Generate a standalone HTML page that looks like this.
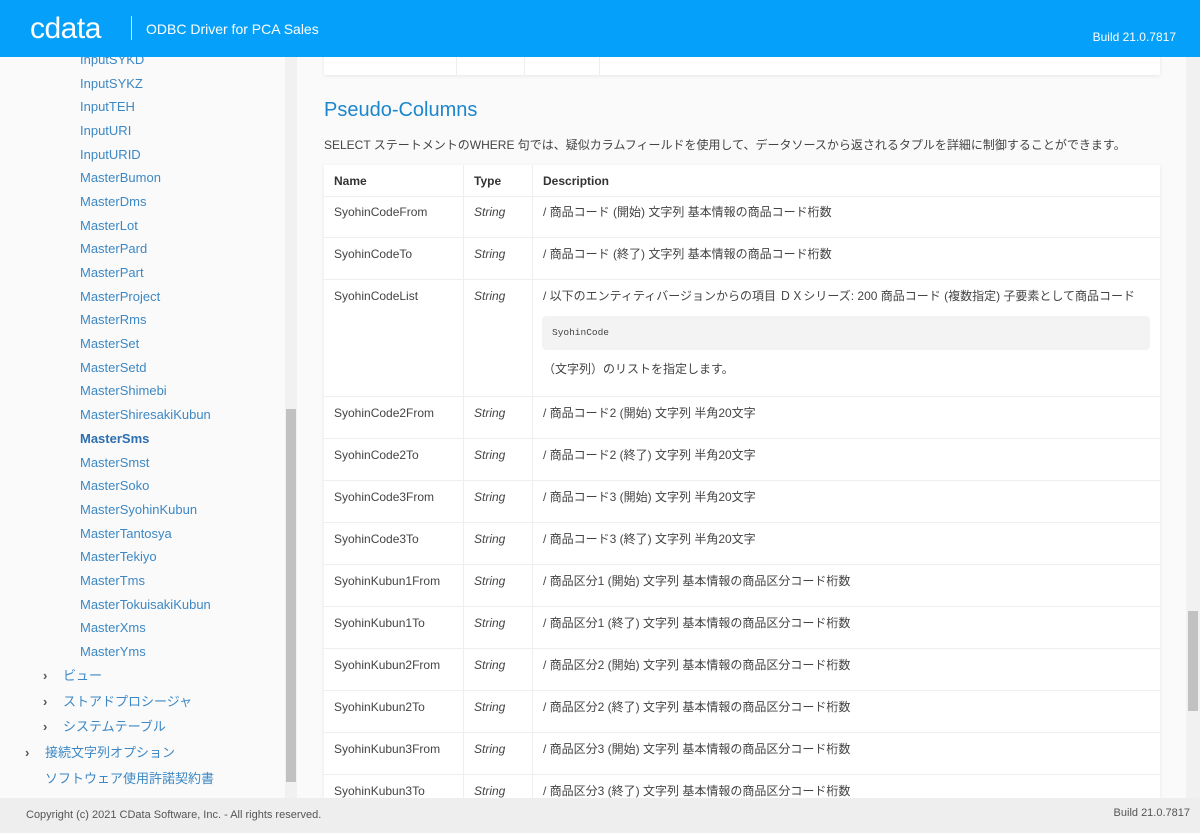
<!DOCTYPE html>
<html><head><meta charset="utf-8"><style>
*{margin:0;padding:0;box-sizing:border-box}
body{width:1200px;height:833px;overflow:hidden;background:#fafafa;font-family:"Liberation Sans","Noto Sans CJK JP",sans-serif;position:relative}
.hdr{position:absolute;left:0;top:0;width:1200px;height:57px;background:#04a0fa;color:#fff}
.logo{position:absolute;left:30px;top:13px;font-size:30px;font-weight:normal;letter-spacing:-0.5px;line-height:32px}
.sep{position:absolute;left:131px;top:16px;width:1px;height:24px;background:#cfe9fb}
.ttl{position:absolute;left:146px;top:20px;font-size:14px;line-height:18px}
.bld{position:absolute;right:24px;top:30px;font-size:12px}
.side{position:absolute;left:0;top:57px;width:285px;height:741px;background:#fafafa;overflow:hidden}
.side div{position:absolute;font-size:13px;line-height:16px;color:#3d88c4;white-space:nowrap}
.side .b{font-weight:bold;color:#2c6fb0}
.side .arr{color:#555;font-size:13px;font-weight:bold}
.sb{position:absolute;left:285px;top:57px;width:12px;height:741px;background:#f1f1f1}
.sb .th{position:absolute;left:1px;top:352px;width:10px;height:373px;background:#c1c1c1}
.rsb{position:absolute;left:1186px;top:57px;width:14px;height:741px;background:#f1f1f1}
.rsb .th{position:absolute;left:2px;top:554px;width:10px;height:100px;background:#c1c1c1}
.main{position:absolute;left:297px;top:57px;width:889px;height:741px;background:#fafafa;overflow:hidden}
.card{position:absolute;background:#fff;box-shadow:0 1px 4px rgba(0,0,0,.08)}
.vl{position:absolute;width:1px;background:#eee}
.hl{position:absolute;height:1px;background:#eee;left:0;right:0}
h2{position:absolute;left:27px;top:42px;font-size:20px;font-weight:normal;color:#1b86cc}
.p{position:absolute;left:27px;top:80px;font-size:12px;line-height:16px;color:#444;white-space:nowrap}
.c{position:absolute;font-size:12px;line-height:16px;color:#444;white-space:nowrap}
.t{font-style:italic}
.h{font-weight:bold;color:#333}
.code{position:absolute;left:245px;top:259px;width:608px;height:34px;background:#f3f3f3;border-radius:4px;font-family:"Liberation Mono",monospace;font-size:9.5px;color:#444;padding:11px 10px}
.ftr{position:absolute;left:0;top:798px;width:1200px;height:35px;background:#eeeeee;font-size:11px;color:#555}
</style></head><body>
<div class="hdr"><div class="logo">cdata</div><div class="sep"></div><div class="ttl">ODBC Driver for PCA Sales</div><div class="bld">Build 21.0.7817</div></div>
<div class="side">
<div style="left:80px;top:-5px">InputSYKD</div>
<div style="left:80px;top:19px">InputSYKZ</div>
<div style="left:80px;top:42px">InputTEH</div>
<div style="left:80px;top:66px">InputURI</div>
<div style="left:80px;top:90px">InputURID</div>
<div style="left:80px;top:113px">MasterBumon</div>
<div style="left:80px;top:137px">MasterDms</div>
<div style="left:80px;top:161px">MasterLot</div>
<div style="left:80px;top:184px">MasterPard</div>
<div style="left:80px;top:208px">MasterPart</div>
<div style="left:80px;top:232px">MasterProject</div>
<div style="left:80px;top:255px">MasterRms</div>
<div style="left:80px;top:279px">MasterSet</div>
<div style="left:80px;top:303px">MasterSetd</div>
<div style="left:80px;top:326px">MasterShimebi</div>
<div style="left:80px;top:350px">MasterShiresakiKubun</div>
<div class="b" style="left:80px;top:374px">MasterSms</div>
<div style="left:80px;top:398px">MasterSmst</div>
<div style="left:80px;top:421px">MasterSoko</div>
<div style="left:80px;top:445px">MasterSyohinKubun</div>
<div style="left:80px;top:469px">MasterTantosya</div>
<div style="left:80px;top:492px">MasterTekiyo</div>
<div style="left:80px;top:516px">MasterTms</div>
<div style="left:80px;top:540px">MasterTokuisakiKubun</div>
<div style="left:80px;top:563px">MasterXms</div>
<div style="left:80px;top:587px">MasterYms</div>
<div class="arr" style="left:43px;top:611px">›</div><div style="left:63px;top:611px">ビュー</div>
<div class="arr" style="left:43px;top:637px">›</div><div style="left:63px;top:637px">ストアドプロシージャ</div>
<div class="arr" style="left:43px;top:662px">›</div><div style="left:63px;top:662px">システムテーブル</div>
<div class="arr" style="left:25px;top:688px">›</div><div style="left:45px;top:688px">接続文字列オプション</div>
<div style="left:45px;top:714px">ソフトウェア使用許諾契約書</div>
</div>
<div class="sb"><div class="th"></div></div>
<div class="main">
<div class="card" style="left:27px;top:-10px;width:836px;height:28px">
<div class="vl" style="left:132px;top:0;height:28px"></div><div class="vl" style="left:200px;top:0;height:28px"></div><div class="vl" style="left:275px;top:0;height:28px"></div></div>
<h2>Pseudo-Columns</h2>
<div class="p">SELECT ステートメントのWHERE 句では、疑似カラムフィールドを使用して、データソースから返されるタプルを詳細に制御することができます。</div>
<div class="card" style="left:27px;top:108px;width:836px;height:700px">
<div class="vl" style="left:139px;top:0;height:700px"></div><div class="vl" style="left:208px;top:0;height:700px"></div>
<div class="hl" style="top:31px"></div><div class="hl" style="top:72px"></div><div class="hl" style="top:114px"></div><div class="hl" style="top:231px"></div><div class="hl" style="top:273px"></div><div class="hl" style="top:315px"></div><div class="hl" style="top:357px"></div><div class="hl" style="top:399px"></div><div class="hl" style="top:441px"></div><div class="hl" style="top:483px"></div><div class="hl" style="top:525px"></div><div class="hl" style="top:567px"></div><div class="hl" style="top:609px"></div>
</div>
<div class="c h" style="left:37px;top:116px">Name</div><div class="c h" style="left:177px;top:116px">Type</div><div class="c h" style="left:246px;top:116px">Description</div>
<div class="c" style="left:37px;top:147px">SyohinCodeFrom</div><div class="c t" style="left:177px;top:147px">String</div><div class="c" style="left:246px;top:147px">/ 商品コード (開始) 文字列 基本情報の商品コード桁数</div>
<div class="c" style="left:37px;top:189px">SyohinCodeTo</div><div class="c t" style="left:177px;top:189px">String</div><div class="c" style="left:246px;top:189px">/ 商品コード (終了) 文字列 基本情報の商品コード桁数</div>
<div class="c" style="left:37px;top:231px">SyohinCodeList</div><div class="c t" style="left:177px;top:231px">String</div><div class="c" style="left:246px;top:231px">/ 以下のエンティティバージョンからの項目 ＤＸシリーズ: 200 商品コード (複数指定) 子要素として商品コード</div>
<div class="code">SyohinCode</div>
<div class="c" style="left:246px;top:304px">（文字列）のリストを指定します。</div>
<div class="c" style="left:37px;top:348px">SyohinCode2From</div><div class="c t" style="left:177px;top:348px">String</div><div class="c" style="left:246px;top:348px">/ 商品コード2 (開始) 文字列 半角20文字</div>
<div class="c" style="left:37px;top:390px">SyohinCode2To</div><div class="c t" style="left:177px;top:390px">String</div><div class="c" style="left:246px;top:390px">/ 商品コード2 (終了) 文字列 半角20文字</div>
<div class="c" style="left:37px;top:432px">SyohinCode3From</div><div class="c t" style="left:177px;top:432px">String</div><div class="c" style="left:246px;top:432px">/ 商品コード3 (開始) 文字列 半角20文字</div>
<div class="c" style="left:37px;top:474px">SyohinCode3To</div><div class="c t" style="left:177px;top:474px">String</div><div class="c" style="left:246px;top:474px">/ 商品コード3 (終了) 文字列 半角20文字</div>
<div class="c" style="left:37px;top:516px">SyohinKubun1From</div><div class="c t" style="left:177px;top:516px">String</div><div class="c" style="left:246px;top:516px">/ 商品区分1 (開始) 文字列 基本情報の商品区分コード桁数</div>
<div class="c" style="left:37px;top:558px">SyohinKubun1To</div><div class="c t" style="left:177px;top:558px">String</div><div class="c" style="left:246px;top:558px">/ 商品区分1 (終了) 文字列 基本情報の商品区分コード桁数</div>
<div class="c" style="left:37px;top:600px">SyohinKubun2From</div><div class="c t" style="left:177px;top:600px">String</div><div class="c" style="left:246px;top:600px">/ 商品区分2 (開始) 文字列 基本情報の商品区分コード桁数</div>
<div class="c" style="left:37px;top:642px">SyohinKubun2To</div><div class="c t" style="left:177px;top:642px">String</div><div class="c" style="left:246px;top:642px">/ 商品区分2 (終了) 文字列 基本情報の商品区分コード桁数</div>
<div class="c" style="left:37px;top:684px">SyohinKubun3From</div><div class="c t" style="left:177px;top:684px">String</div><div class="c" style="left:246px;top:684px">/ 商品区分3 (開始) 文字列 基本情報の商品区分コード桁数</div>
<div class="c" style="left:37px;top:726px">SyohinKubun3To</div><div class="c t" style="left:177px;top:726px">String</div><div class="c" style="left:246px;top:726px">/ 商品区分3 (終了) 文字列 基本情報の商品区分コード桁数</div>
</div>
<div class="rsb"><div class="th"></div></div>
<div class="ftr"><div style="position:absolute;left:26px;top:11px">Copyright (c) 2021 CData Software, Inc. - All rights reserved.</div><div style="position:absolute;right:10px;top:9px">Build 21.0.7817</div></div>
</body></html>
